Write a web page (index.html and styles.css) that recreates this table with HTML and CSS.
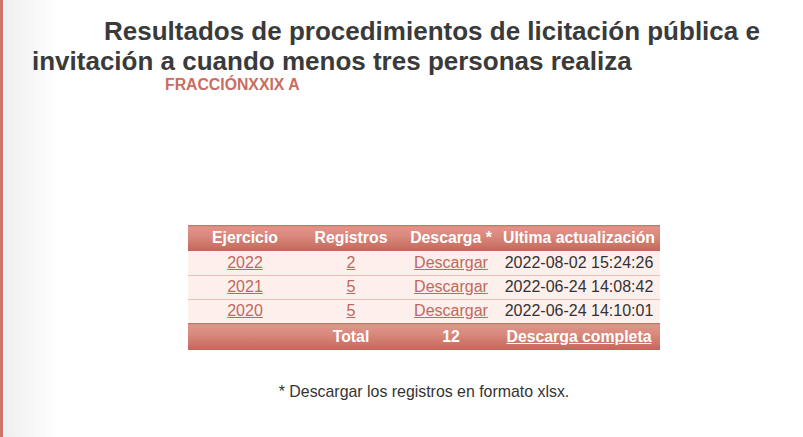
FILE: index.html
```html
<!DOCTYPE html>
<html lang="es">
<head>
<meta charset="utf-8">
<title>Resultados de procedimientos</title>
<link rel="stylesheet" href="styles.css">
</head>
<body>
<div class="page">
  <h1 class="title">Resultados de procedimientos de licitación pública e invitación a cuando menos tres personas realiza</h1>
  <div class="fraccion">FRACCIÓNXXIX A</div>
  <div class="content">
    <table class="results">
      <colgroup>
        <col class="c1"><col class="c2"><col class="c3"><col class="c4">
      </colgroup>
      <thead>
        <tr class="head">
          <th>Ejercicio</th>
          <th>Registros</th>
          <th>Descarga *</th>
          <th>Ultima actualización</th>
        </tr>
      </thead>
      <tbody>
        <tr>
          <td><a href="#">2022</a></td>
          <td><a href="#">2</a></td>
          <td><a href="#">Descargar</a></td>
          <td>2022-08-02 15:24:26</td>
        </tr>
        <tr>
          <td><a href="#">2021</a></td>
          <td><a href="#">5</a></td>
          <td><a href="#">Descargar</a></td>
          <td>2022-06-24 14:08:42</td>
        </tr>
        <tr>
          <td><a href="#">2020</a></td>
          <td><a href="#">5</a></td>
          <td><a href="#">Descargar</a></td>
          <td>2022-06-24 14:10:01</td>
        </tr>
      </tbody>
      <tfoot>
        <tr class="foot">
          <td></td>
          <td>Total</td>
          <td>12</td>
          <td><a href="#">Descarga completa</a></td>
        </tr>
      </tfoot>
    </table>
    <p class="note">* Descargar los registros en formato xlsx.</p>
  </div>
</div>
</body>
</html>
```

FILE: styles.css
```css
html, body {
  margin: 0;
  padding: 0;
}

body {
  width: 803px;
  min-height: 437px;
  font-family: "Liberation Sans", Arial, sans-serif;
  color: #333;
  background: linear-gradient(to right, #d0746a 0, #d0746a 3px, #fafafa 3px, #fafafa 4px, #efefef 5px, #f5f5f5 25px, #ffffff 60px);
}

.page {
  padding-top: 16px;
}

.title {
  margin: 0;
  box-sizing: border-box;
  width: 790px;
  padding-left: 32px;
  text-indent: 72px;
  font-size: 26px;
  line-height: 30px;
  font-weight: bold;
  color: #3a3a3a;
}

.fraccion {
  padding-left: 165px;
  font-size: 15.8px;
  line-height: 18px;
  font-weight: bold;
  color: #c96d60;
}

.content {
  margin-left: 45px;
  padding-top: 131px;
}

.results {
  margin: 0 auto;
  width: 472px;
  table-layout: fixed;
  border-collapse: collapse;
  font-size: 16px;
}

.c1 { width: 114px; }
.c2 { width: 98px; }
.c3 { width: 102px; }
.c4 { width: 158px; }

.results th,
.results td {
  padding: 0;
  text-align: center;
  white-space: nowrap;
}

.results th:last-child,
.results td:last-child {
  padding-right: 4px;
}

.head {
  height: 26px;
  background: linear-gradient(#c8685c 0, #e09489 2px, #d98a7f 40%, #cd7669 75%, #c4655a 100%);
}

.head th {
  color: #fff;
  font-size: 15.8px;
  font-weight: bold;
}

tbody tr {
  height: 24px;
  background: #fcefec;
  border-bottom: 1px solid #ebbdb5;
}

tbody tr:last-child {
  border-bottom: none;
}

tbody td {
  color: #333;
}

tbody a {
  color: #c2685b;
  text-decoration: underline;
}

.foot {
  height: 27px;
  background: linear-gradient(#c8685c 0, #e09489 2px, #d98a7f 40%, #cd7669 75%, #c4655a 100%);
}

.foot td {
  color: #fff;
  font-weight: bold;
  font-size: 15.8px;
}

.foot a {
  color: #fff;
  text-decoration: underline;
}

.note {
  margin: 33px 0 0;
  text-align: center;
  font-size: 15.9px;
  line-height: 18px;
  color: #333;
}
```
